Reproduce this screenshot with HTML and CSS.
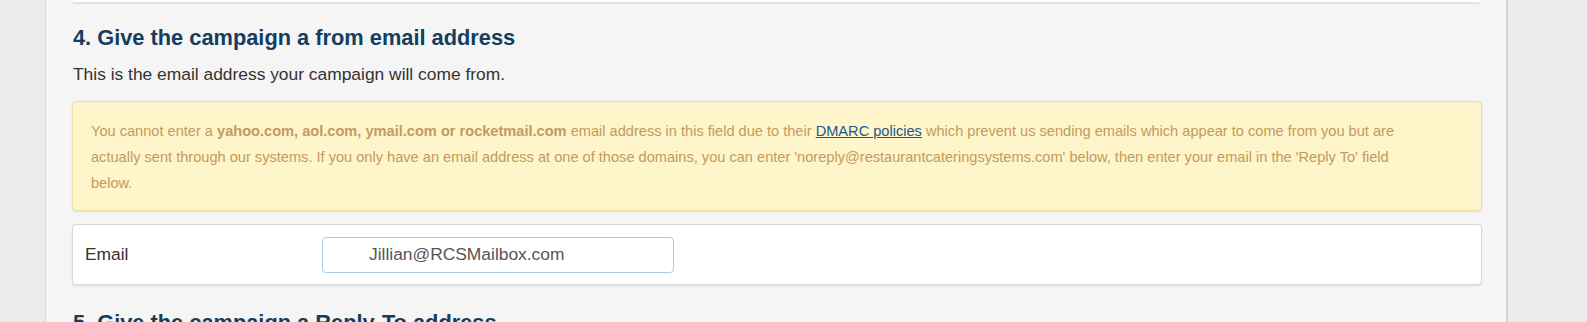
FILE: index.html
```html
<!DOCTYPE html>
<html lang="en">
<head>
  <meta charset="UTF-8">
  <meta name="viewport" content="width=device-width, initial-scale=1.0">
  <title>Campaign - From Address</title>
  <link rel="stylesheet" href="styles.css">
</head>
<body>
  <div class="pagina">
    <div class="lateral"></div>
    <div class="principal">
      <!-- tarjeta anterior (paso 3) -->
      <div class="tarjeta-previa"></div>

      <h2 class="paso">4. Give the campaign a from email address</h2>
      <p class="descripcion">This is the email address your campaign will come from.</p>

      <div class="aviso">
        You cannot enter a <b>yahoo.com, aol.com, ymail.com or rocketmail.com</b> email address in this field due to their <a href="#">DMARC policies</a> which prevent us sending emails which appear to come from you but are actually sent through our systems. If you only have an email address at one of those domains, you can enter 'noreply@restaurantcateringsystems.com' below, then enter your email in the 'Reply To' field below.
      </div>

      <div class="campo">
        <label for="email">Email</label>
        <input id="email" type="text" value="Jillian@RCSMailbox.com">
      </div>

      <h2 class="paso siguiente">5. Give the campaign a Reply-To address</h2>
    </div>
  </div>
</body>
</html>
```

FILE: styles.css
```css
/* Estilos globales */
* {
  box-sizing: border-box;
}
body {
  margin: 0;
  background-color: #ebebeb;
  font-family: "Liberation Sans", Arial, sans-serif;
  overflow: hidden;
}
.pagina {
  display: flex;
  height: 322px;
}
.lateral {
  width: 45px;
  flex-shrink: 0;
}
.principal {
  width: 1463px;
  flex-shrink: 0;
  background-color: #f5f5f5;
  border-left: 1px solid #d9d9d9;
  border-right: 2px solid #d4d4d4;
  padding: 0 24px 0 26px;
}
.tarjeta-previa {
  height: 2px;
  margin: 0 0 0 1px;
  width: 1407px;
  background-color: #fff;
  box-shadow: 0 1px 3px rgba(0, 0, 0, 0.18);
}
.paso {
  margin: 22px 0 0 1px;
  font-size: 21.8px;
  line-height: 28px;
  font-weight: bold;
  color: #133e60;
}
.descripcion {
  margin: 10px 0 0 1px;
  font-size: 17.4px;
  line-height: 24px;
  color: #333;
}
.aviso {
  margin-top: 15px;
  padding: 16px 50px 14px 18px;
  background-color: #fef5cb;
  border: 1px solid #eedfa5;
  border-radius: 4px;
  box-shadow: 0 1px 2px rgba(0, 0, 0, 0.08);
  color: #c49a5d;
  font-size: 14.6px;
  line-height: 26px;
}
.aviso b {
  font-weight: bold;
}
.aviso a {
  color: #1b5a8c;
  text-decoration: underline;
}
.campo {
  margin-top: 13px;
  height: 61px;
  display: flex;
  align-items: center;
  padding: 0 12px;
  background-color: #fff;
  border: 1px solid #d8d8d8;
  border-radius: 4px;
  box-shadow: 0 1px 2px rgba(0, 0, 0, 0.1);
}
.campo label {
  width: 237px;
  font-size: 17.4px;
  color: #333;
}
.campo input {
  width: 352px;
  height: 36px;
  padding: 0 0 0 46px;
  border: 1px solid #a8cbea;
  border-radius: 4px;
  font-family: "Liberation Sans", Arial, sans-serif;
  font-size: 17.4px;
  color: #555;
  outline: none;
}
.paso.siguiente {
  margin-top: 24px;
}
```
